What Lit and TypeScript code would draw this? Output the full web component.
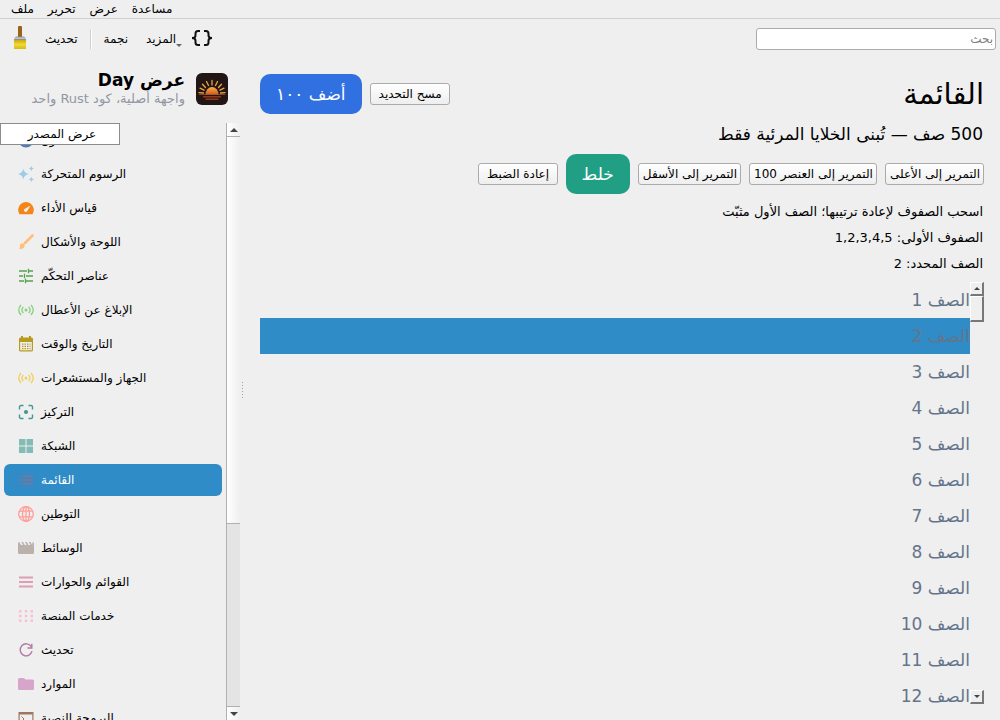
import { LitElement, html, css, svg } from "lit";
import { customElement, property, state } from "lit/decorators.js";

const glyphs: Record<string, unknown> = {
  info: svg`<circle cx="8" cy="8" r="7.5" fill="currentColor"/>`,
  sparkle: svg`<path fill="currentColor" d="M5.3 2.8Q6.300 7 10.600 8Q6.300 9 5.300 13.200Q4.300 9 0 8Q4.300 7 5.300 2.800ZM13.400 0Q13.800 2.200 16 2.600Q13.800 3 13.400 5.200Q13 3 10.800 2.600Q13 2.200 13.400 0ZM13.400 10.800Q13.800 13 16 13.400Q13.800 13.800 13.400 16Q13 13.800 10.800 13.400Q13 13 13.400 10.800Z"/>`,
  gauge: svg`<path fill="currentColor" d="M1.500 14.200A7.800 7.800 0 1 1 14.500 14.200Z"/><path fill="#efefef" d="M12.500 5.500L9.300 11A1.700 1.700 0 1 1 7 8.700Z"/>`,
  brush: svg`<path d="M14.500 1.500L7 9" stroke="currentColor" stroke-width="2.600" stroke-linecap="round"/><path fill="currentColor" d="M3.500 9.200Q6.600 8.900 6.700 12Q6 15.500 1 14.800Q2.400 13.600 2 11.500Q2 9.600 3.500 9.200Z"/>`,
  sliders: svg`<path d="M1 3h8M11 3h4M10.500 .8v4.400M1 8h4M8 8h7M6.500 5.800v4.400M1 13h5M8 13h7M7.500 10.800v4.400" stroke="currentColor" stroke-width="1.300" fill="none"/>`,
  signal: svg`<g fill="none" stroke="currentColor" stroke-width="1.300"><path d="M3 3Q-1.500 8 3 13M5.300 5Q2.500 8 5.300 11M10.700 5Q13.500 8 10.700 11M13 3Q17.500 8 13 13"/></g><circle cx="8" cy="8" r="1.500" fill="currentColor"/>`,
  calendar: svg`<path fill="currentColor" fill-rule="evenodd" d="M1 3Q1 1.500 2.500 1.500H3V0H5V1.500H11V0H13V1.500H13.500Q15 1.500 15 3V14Q15 15.500 13.500 15.500H2.500Q1 15.500 1 14ZM2.200 6V14.300H13.800V6Z"/><path d="M4 8.200h8.500M4 10.400h8.500M4 12.600h8.500" stroke="currentColor" stroke-width="1.300" stroke-dasharray="1.500 1"/>`,
  focus: svg`<path d="M1.500 5.500V3Q1.500 1.500 3 1.500H5.500M10.500 1.500H13Q14.500 1.500 14.500 3V5.500M14.500 10.500V13Q14.500 14.500 13 14.500H10.500M5.500 14.500H3Q1.500 14.500 1.500 13V10.500" fill="none" stroke="currentColor" stroke-width="1.400"/><circle cx="8" cy="8" r="2.100" fill="currentColor"/>`,
  grid: svg`<path fill="currentColor" d="M1 1h6.500v6.500H1zM8.500 1H15v6.500H8.500zM1 8.500h6.500V15H1zM8.500 8.500H15V15H8.500z"/>`,
  list: svg`<path d="M4.500 4.300H15M4.500 8H15M4.500 11.700H15M1 4.300h2M1 8h2M1 11.700h2" stroke="currentColor" stroke-width="1.400"/>`,
  globe: svg`<g fill="none" stroke="currentColor" stroke-width="1.300"><circle cx="8" cy="8" r="7.300"/><ellipse cx="8" cy="8" rx="3.500" ry="7.300"/><path d="M8 .7v14.600M1.500 5.200h13M1.500 10.800h13"/></g>`,
  clapper: svg`<path fill="currentColor" d="M1.200 2L3 5H5L3.400 2H5L6.700 5H8.700L7 2H8.800L10.500 5H12.500L10.700 2H12.500L14.200 5L14.500 2Q16 2 16 3.500V12.500Q16 14 14.500 14H1.500Q0 14 0 12.500V3.500Q0 2.200 1.200 2Z"/>`,
  lines: svg`<path d="M1 3.500h14M1 8h14M1 12.500h14" stroke="currentColor" stroke-width="1.800"/>`,
  dots: svg`<path fill="currentColor" d="M1 2h2.500v2.500H1zM6.800 2h2.500v2.500H6.800zM12.500 2H15v2.500h-2.500zM1 6.800h2.500v2.500H1zM6.800 6.800h2.500v2.500H6.800zM12.500 6.800H15v2.500h-2.500zM1 11.500h2.500V14H1zM6.800 11.500h2.500V14H6.800zM12.500 11.500H15V14h-2.500z"/>`,
  refresh: svg`<path d="M13.300 4.700A6 6 0 1 0 14 9.200M13.800 1.800V6H9.500" fill="none" stroke="currentColor" stroke-width="1.400"/>`,
  folder: svg`<path fill="currentColor" d="M0 3.500Q0 2 1.500 2H6L7.500 3.500H14.500Q16 3.500 16 5V12.500Q16 14 14.500 14H1.500Q0 14 0 12.500Z"/>`,
  terminal: svg`<path fill="currentColor" fill-rule="evenodd" d="M.5 2h15v12.500H.5ZM1.700 4.500v8.800h12.600V4.500Z"/><path d="M3.500 6.500L6 9L3.500 11.500M8 11.800h4" fill="none" stroke="currentColor"/>`,
};

const pages: [string, string, string][] = [
  ["info", "#4b7db8", "حول"],
  ["sparkle", "#a0cbe8", "الرسوم المتحركة"],
  ["gauge", "#f58518", "قياس الأداء"],
  ["brush", "#ffbf79", "اللوحة والأشكال"],
  ["sliders", "#54a24b", "عناصر التحكّم"],
  ["signal", "#88d27a", "الإبلاغ عن الأعطال"],
  ["calendar", "#b79a20", "التاريخ والوقت"],
  ["signal", "#f2cf5b", "الجهاز والمستشعرات"],
  ["focus", "#439894", "التركيز"],
  ["grid", "#83bcb6", "الشبكة"],
  ["list", "#8a6f96", "القائمة"],
  ["globe", "#ff9d98", "التوطين"],
  ["clapper", "#bab0ac", "الوسائط"],
  ["lines", "#dd9fb4", "القوائم والحوارات"],
  ["dots", "#fcbfd2", "خدمات المنصة"],
  ["refresh", "#b279a2", "تحديث"],
  ["folder", "#d6a5c9", "الموارد"],
  ["terminal", "#9e765f", "البرمجة النصية"],
];

const arrow = (up: boolean) => html`<svg viewBox="0 0 8 4" width="8" height="4" aria-hidden="true">
  <path fill="#444" d=${up ? "M0 4L4 0L8 4Z" : "M0 0L4 4L8 0Z"} /></svg>`;

@customElement("side-nav")
class SideNav extends LitElement {
  @property({ type: Number }) selected = 10;

  static styles = css`
    :host { display: flex; flex-direction: column; min-height: 0; }
    .brand { display: flex; justify-content: flex-end; align-items: flex-start; gap: 11px; height: 63px; padding: 10px 12px 0 0; box-sizing: border-box; flex: none; }
    .logo { margin-top: 3px; }
    .names { text-align: right; }
    .name { margin: 0; font-size: 17px; line-height: 20px; font-weight: bold; }
    .tag { margin: 0; font-size: 13px; line-height: 18px; color: #9397a3; }
    .body { position: relative; display: flex; flex: 1; min-height: 0; }
    .source { position: absolute; top: 0; left: 0; z-index: 1; width: 120px; height: 22px; padding: 0 0 0 4px; background: #fff; border: 1px solid #8c8c8c; font: inherit; color: #000; }
    .items { flex: 1; min-width: 0; overflow: hidden; margin: 0; padding: 1px 4px 0; list-style: none; display: flex; flex-direction: column; gap: 2px; box-sizing: border-box; }
    .item { flex: none; }
    .link { display: flex; align-items: center; gap: 7px; height: 32px; padding: 0 14px; border-radius: 6px; color: #000; text-decoration: none; white-space: nowrap; }
    .current { background: #308cc6; color: #fff; }
    .glyph { width: 16px; height: 16px; flex: none; }
    .scroll { width: 14px; box-sizing: border-box; border-left: 1px solid #b0b0b0; background: #e4e4e4; display: flex; flex-direction: column; }
    .step { height: 13px; display: grid; place-items: center; background: linear-gradient(90deg, #fff, #efefef); }
    .thumb { flex: 387; background: linear-gradient(90deg, #fff, #efefef); border: solid #b0b0b0; border-width: 1px 0; }
    .track { flex: 182; border-bottom: 1px solid #b0b0b0; }
  `;

  render() {
    return html`
      <header class="brand">
        <div class="names" dir="rtl">
          <h2 class="name">عرض Day</h2>
          <p class="tag">واجهة أصلية، كود Rust واحد</p>
        </div>
        <svg class="logo" viewBox="0 0 32 32" width="32" height="32" aria-hidden="true">
          <defs><linearGradient id="sun" x2="0" y2="1"><stop stop-color="#f7b04a"/><stop offset="1" stop-color="#d9581c"/></linearGradient></defs>
          <rect width="32" height="32" rx="6" fill="#211614"/>
          <path d="M16 12V7.500M12.500 12.500L10.500 8.500M19.500 12.500L21.500 8.500M9.500 14.500L6.500 11.200M22.500 14.500L25.500 11.200M8 17.200L4 15.200M24 17.200L28 15.200M7.500 20L3 19.700M24.500 20L29 19.700" stroke="#eda345" stroke-width="1.300" stroke-linecap="round"/>
          <path d="M9.500 21.500A6.500 7.500 0 0 1 22.500 21.500Z" fill="url(#sun)"/>
          <path d="M7 23.800H25M9.500 26.300H22.500" stroke="#8f381e" stroke-width="1.500"/>
          <path d="M3 21.500H29" stroke="#c9682d" stroke-width=".6"/>
        </svg>
      </header>
      <div class="body">
        <button class="source">عرض المصدر</button>
        <ul class="items">
          ${pages.map(([icon, color, label], i) => html`
            <li class="item">
              <a class="link ${i === this.selected ? "current" : ""}" href="#${i}">
                <svg class="glyph" viewBox="0 0 16 16" fill="none" color=${color} aria-hidden="true">${glyphs[icon]}</svg>
                <span>${label}</span>
              </a>
            </li>`)}
        </ul>
        <div class="scroll">
          <div class="step">${arrow(true)}</div>
          <div class="thumb"></div>
          <div class="track"></div>
          <div class="step">${arrow(false)}</div>
        </div>
      </div>`;
  }
}

@customElement("list-page")
class ListPage extends LitElement {
  @state() private picked = 2;

  static styles = css`
    :host { display: flex; flex-direction: column; min-width: 0; min-height: 0; padding: 14px 16px 0 17px; box-sizing: border-box; }
    .bar { display: flex; align-items: center; gap: 8px; height: 40px; flex: none; }
    .title { flex: 1; margin: 0; font-size: 29px; line-height: 40px; font-weight: normal; }
    .lead { margin: 8px 1px; font-size: 17px; line-height: 24px; }
    .note { margin: 0 1px; font-size: 13px; line-height: 26px; }
    .notes { padding: 5px 0; }
    .plain { height: 22px; padding: 0 3px 0 4px; min-width: 80px; font: inherit; color: #000; border: 1px solid #ababab; border-radius: 3px; background: linear-gradient(#fff, #eee); white-space: nowrap; }
    .big { height: 40px; padding: 0 16px; font: inherit; font-size: 17px; color: #fff; border: 0; border-radius: 10px; white-space: nowrap; }
    .blue { background: #3070e0; }
    .green { background: #209f85; }
    .list { display: flex; flex: 1; min-height: 0; }
    .rows { flex: 1; min-width: 0; margin: 0; padding: 0; list-style: none; overflow: hidden; }
    .row { height: 36px; line-height: 36px; font-size: 17px; color: #64748b; cursor: default; }
    .picked { background: #308cc6; }
    .scroll { width: 14px; padding-bottom: 16px; display: flex; flex-direction: column; }
    .step, .thumb { box-sizing: border-box; background: #efefef; border: 1px solid #fff; border-right: 2px solid #777; border-bottom: 2px solid #777; }
    .step { height: 14px; display: grid; place-items: center; }
    .thumb { height: 26px; }
    .track { flex: 1; }
    .mini { width: 6px; height: 3px; }
  `;

  render() {
    const rows = Array.from({ length: 12 }, (_, i) => i + 1);
    return html`
      <div class="bar">
        <h1 class="title">القائمة</h1>
        <button class="plain">مسح التحديد</button>
        <button class="big blue">أضف ١٠٠</button>
      </div>
      <p class="lead">500 صف — تُبنى الخلايا المرئية فقط</p>
      <div class="bar">
        <button class="plain">التمرير إلى الأعلى</button>
        <button class="plain">التمرير إلى العنصر 100</button>
        <button class="plain">التمرير إلى الأسفل</button>
        <button class="big green">خلط</button>
        <button class="plain">إعادة الضبط</button>
      </div>
      <div class="notes">
        <p class="note">اسحب الصفوف لإعادة ترتيبها؛ الصف الأول مثبّت</p>
        <p class="note">الصفوف الأولى: 1,2,3,4,5</p>
        <p class="note">الصف المحدد: ${this.picked}</p>
      </div>
      <div class="list">
        <div class="scroll">
          <div class="step"><svg class="mini" viewBox="0 0 6 3" aria-hidden="true"><path fill="#444" d="M0 3L3 0L6 3Z"/></svg></div>
          <div class="thumb"></div>
          <div class="track"></div>
          <div class="step"><svg class="mini" viewBox="0 0 6 3" aria-hidden="true"><path fill="#444" d="M0 0L3 3L6 0Z"/></svg></div>
        </div>
        <ul class="rows">
          ${rows.map((n) => html`<li class="row ${n === this.picked ? "picked" : ""}" @click=${() => (this.picked = n)}>الصف ${n}</li>`)}
        </ul>
      </div>`;
  }
}

@customElement("app-root")
class AppRoot extends LitElement {
  static styles = css`
    :host { display: flex; flex-direction: column; height: 100vh; overflow: hidden; background: #efefef; color: #000; font-family: "DejaVu Sans", sans-serif; font-size: 12px; }
    .menu { display: flex; gap: 14px; height: 19px; padding: 0 11px; box-sizing: border-box; border-bottom: 1px solid #d0d0d0; flex: none; }
    .entry { padding: 0; border: 0; background: none; font: inherit; color: inherit; line-height: 18px; }
    .tools { display: flex; align-items: center; height: 41px; padding: 0 4px 2px 10px; box-sizing: border-box; flex: none; }
    .tool { display: flex; align-items: center; height: 28px; padding: 0; border: 0; background: none; font: inherit; color: inherit; }
    .left { display: flex; align-items: center; gap: 12px; flex: 1; }
    .refresh { margin-left: 3px; }
    .rule { width: 1px; height: 20px; background: #d0d0d0; border-right: 1px solid #fff; }
    .more { margin-left: 6px; }
    .caret { align-self: flex-end; margin-bottom: 6px; }
    .braces { margin-left: -4px; }
    .search { width: 24vw; height: 22px; box-sizing: border-box; padding: 0 2px; border: 1px solid #ababab; border-radius: 3px; background: #fff; font: inherit; }
    .search::placeholder { color: #808080; opacity: 1; }
    .main { display: grid; grid-template-columns: 240px 3px minmax(0, 1fr); flex: 1; min-height: 0; }
    .grip { align-self: center; width: 1px; height: 17px; justify-self: end; background: repeating-linear-gradient(#a0a0a0 0 1px, transparent 1px 3px); }
  `;

  render() {
    return html`
      <nav class="menu">
        ${["ملف", "تحرير", "عرض", "مساعدة"].map((m) => html`<button class="entry">${m}</button>`)}
      </nav>
      <div class="tools">
        <div class="left">
          <button class="tool" aria-label="فرشاة">
            <svg viewBox="0 0 20 26" width="20" height="26" aria-hidden="true">
              <defs>
                <linearGradient id="paint" x2="0" y2="1"><stop stop-color="#c9aa08"/><stop offset=".5" stop-color="#f0d838"/><stop offset="1" stop-color="#d8ba10"/></linearGradient>
                <linearGradient id="ferrule" x2="0" y2="1"><stop stop-color="#8a8a8a"/><stop offset=".5" stop-color="#ccc"/><stop offset="1" stop-color="#777"/></linearGradient>
              </defs>
              <rect x="8" y="0" width="4" height="12" rx="1" fill="#9a6418"/>
              <path d="M4 14Q4 10.500 7 10.500H13Q16 10.500 16 14Z" fill="url(#ferrule)"/>
              <rect x="4" y="14" width="12" height="9" fill="url(#paint)"/>
            </svg>
          </button>
          <button class="tool refresh">تحديث</button>
          <span class="rule"></span>
          <button class="tool">نجمة</button>
          <button class="tool more">المزيد<svg class="caret" viewBox="0 0 6 3" width="6" height="3" aria-hidden="true"><path fill="#666" d="M0 0H6L3 3Z"/></svg></button>
          <button class="tool braces" aria-label="الشيفرة">
            <svg viewBox="0 0 24 24" width="24" height="24" fill="none" stroke="#111" stroke-width="2" aria-hidden="true">
              <path d="M10 4H8Q5.500 4 5.500 6.500V8.500Q5.500 11 2 11Q5.500 11 5.500 13.500V15.500Q5.500 18 8 18H10M14 4H16Q18.500 4 18.500 6.500V8.500Q18.500 11 22 11Q18.500 11 18.500 13.500V15.500Q18.500 18 16 18H14"/>
            </svg>
          </button>
        </div>
        <input class="search" type="search" dir="rtl" placeholder="بحث" aria-label="بحث" />
      </div>
      <div class="main">
        <side-nav></side-nav>
        <span class="grip"></span>
        <list-page dir="rtl"></list-page>
      </div>`;
  }
}
